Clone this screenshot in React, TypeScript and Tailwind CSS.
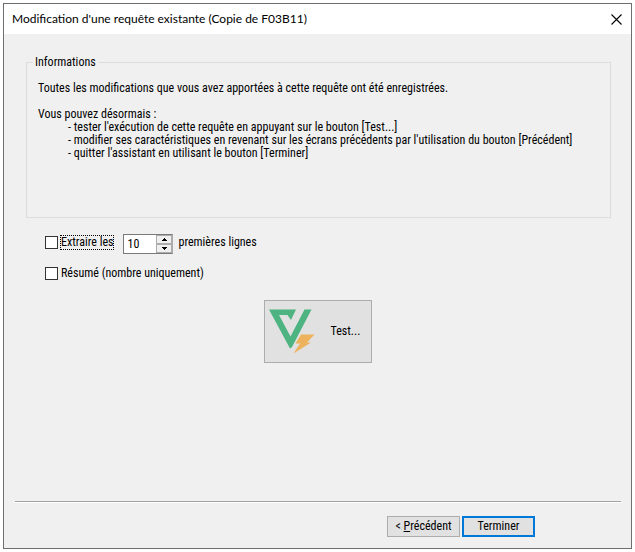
import React, { useState } from 'react';

function CloseIcon() {
  return (
    <svg width="11" height="11" viewBox="0 0 11 11" fill="none" stroke="#000" strokeWidth="1.1" aria-hidden="true">
      <path d="M0.5 0.5l10 10M10.5 0.5l-10 10" />
    </svg>
  );
}

function TestLogo() {
  return (
    <svg width="46" height="46" viewBox="0 0 46 46" aria-hidden="true">
      <path fill="#4db380" d="M0 0.5H27L22 11L18.5 6H10L21.5 27.5L35.5 0.5H42.5L23 38L21 39.5Z" />
      <path fill="#edb25c" d="M32 25.5H45.5L38 33.5H42L24.5 44.5L31 34.5H26.5Z" />
    </svg>
  );
}

function Arrow({ up = false }: { up?: boolean }) {
  return (
    <svg width="5" height="3" viewBox="0 0 5 3" fill="#000" shapeRendering="crispEdges" aria-hidden="true">
      <path d={up ? 'M2 0h1v1h1v1h1v1H0V2h1V1h1z' : 'M0 0h5v1H4v1H3v1H2V2H1V1H0z'} />
    </svg>
  );
}

const checkboxClass =
  'w-[13px] h-[13px] shrink-0 appearance-none border border-[#333] bg-white checked:bg-[#0078d7]';

const spinClass = 'grow flex items-center justify-center border border-[#acacac]';

const footerButtonClass = 'w-[73px] h-[21px] bg-[#e1e1e1] leading-[13px] whitespace-nowrap';

export default function App() {
  const [limit, setLimit] = useState(false);
  const [summary, setSummary] = useState(false);
  const [count, setCount] = useState(10);

  return (
    <div className="min-h-screen flex flex-col bg-white p-[3px] font-['Roboto_Condensed','Liberation_Sans',sans-serif] text-xs leading-[13px] text-black">
      <div role="dialog" aria-labelledby="title" className="grow flex flex-col border border-[#6e6e6e] bg-[#f0f0f0]">
        <header className="flex items-center justify-between h-[30px] pl-2 pr-[9px] bg-white">
          <h1 id="title" className="font-[Lato,'Open_Sans',sans-serif] text-xs whitespace-nowrap">
            Modification d'une requête existante (Copie de F03B11)
          </h1>
          <button type="button" aria-label="Fermer">
            <CloseIcon />
          </button>
        </header>

        <main className="grow flex flex-col pt-[22px] pl-[22px] pr-5">
          <fieldset className="border border-[#dcdcdc] px-[11px] pt-[13px] pb-[57px]">
            <legend className="-ml-[5px] px-0.5">Informations</legend>
            <p>Toutes les modifications que vous avez apportées à cette requête ont été enregistrées.</p>
            <p className="mt-[13px]">Vous pouvez désormais :</p>
            <ul className="pl-[30px]">
              <li>- tester l'exécution de cette requête en appuyant sur le bouton [Test...]</li>
              <li>- modifier ses caractéristiques en revenant sur les écrans précédents par l'utilisation du bouton [Précédent]</li>
              <li>- quitter l'assistant en utilisant le bouton [Terminer]</li>
            </ul>
          </fieldset>

          <div className="flex items-start mt-4 pl-[19px]">
            <div className="flex items-center pt-px">
              <input id="limit" type="checkbox" className={checkboxClass} checked={limit} onChange={(e) => setLimit(e.target.checked)} />
              <label htmlFor="limit" className="ml-0.5 border border-dotted border-black whitespace-nowrap">
                Extraire les
              </label>
            </div>
            <div className="flex w-[50px] h-5 ml-[9px] border border-[#7a7a7a] border-r-[#acacac] bg-white">
              <input
                type="text"
                aria-label="Nombre de lignes"
                className="w-8 min-w-0 pl-[3px] outline-none"
                value={count}
                onChange={(e) => setCount(Number(e.target.value) || 0)}
              />
              <div className="grow flex flex-col bg-[#f0f0f0]">
                <button type="button" aria-label="Augmenter" className={spinClass} onClick={() => setCount(count + 1)}>
                  <Arrow up />
                </button>
                <button type="button" aria-label="Diminuer" className={spinClass} onClick={() => setCount(Math.max(0, count - 1))}>
                  <Arrow />
                </button>
              </div>
            </div>
            <span className="pt-0.5 ml-[5px] whitespace-nowrap">premières lignes</span>
          </div>

          <div className="flex items-center mt-[13px] pl-[19px]">
            <input id="summary" type="checkbox" className={checkboxClass} checked={summary} onChange={(e) => setSummary(e.target.checked)} />
            <label htmlFor="summary" className="ml-[3px] whitespace-nowrap">
              Résumé (nombre uniquement)
            </label>
          </div>

          <button type="button" className="self-center flex items-center gap-4 w-[108px] h-[63px] mt-5 mr-0.5 pl-1 border border-[#adadad] bg-[#e1e1e1]">
            <TestLogo />
            Test...
          </button>
        </main>

        <footer className="pl-[11px] pr-[10px] pb-[11px]">
          <div className="h-0.5 border-t border-t-[#a0a0a0] border-b border-b-white" />
          <div className="flex justify-end gap-0.5 pt-[13px] pr-[86px]">
            <button type="button" className={`${footerButtonClass} border border-[#adadad]`}>
              &lt; <span className="underline">P</span>récédent
            </button>
            <button type="submit" className={`${footerButtonClass} border-2 border-[#0078d7]`}>
              Terminer
            </button>
          </div>
        </footer>
      </div>
    </div>
  );
}
